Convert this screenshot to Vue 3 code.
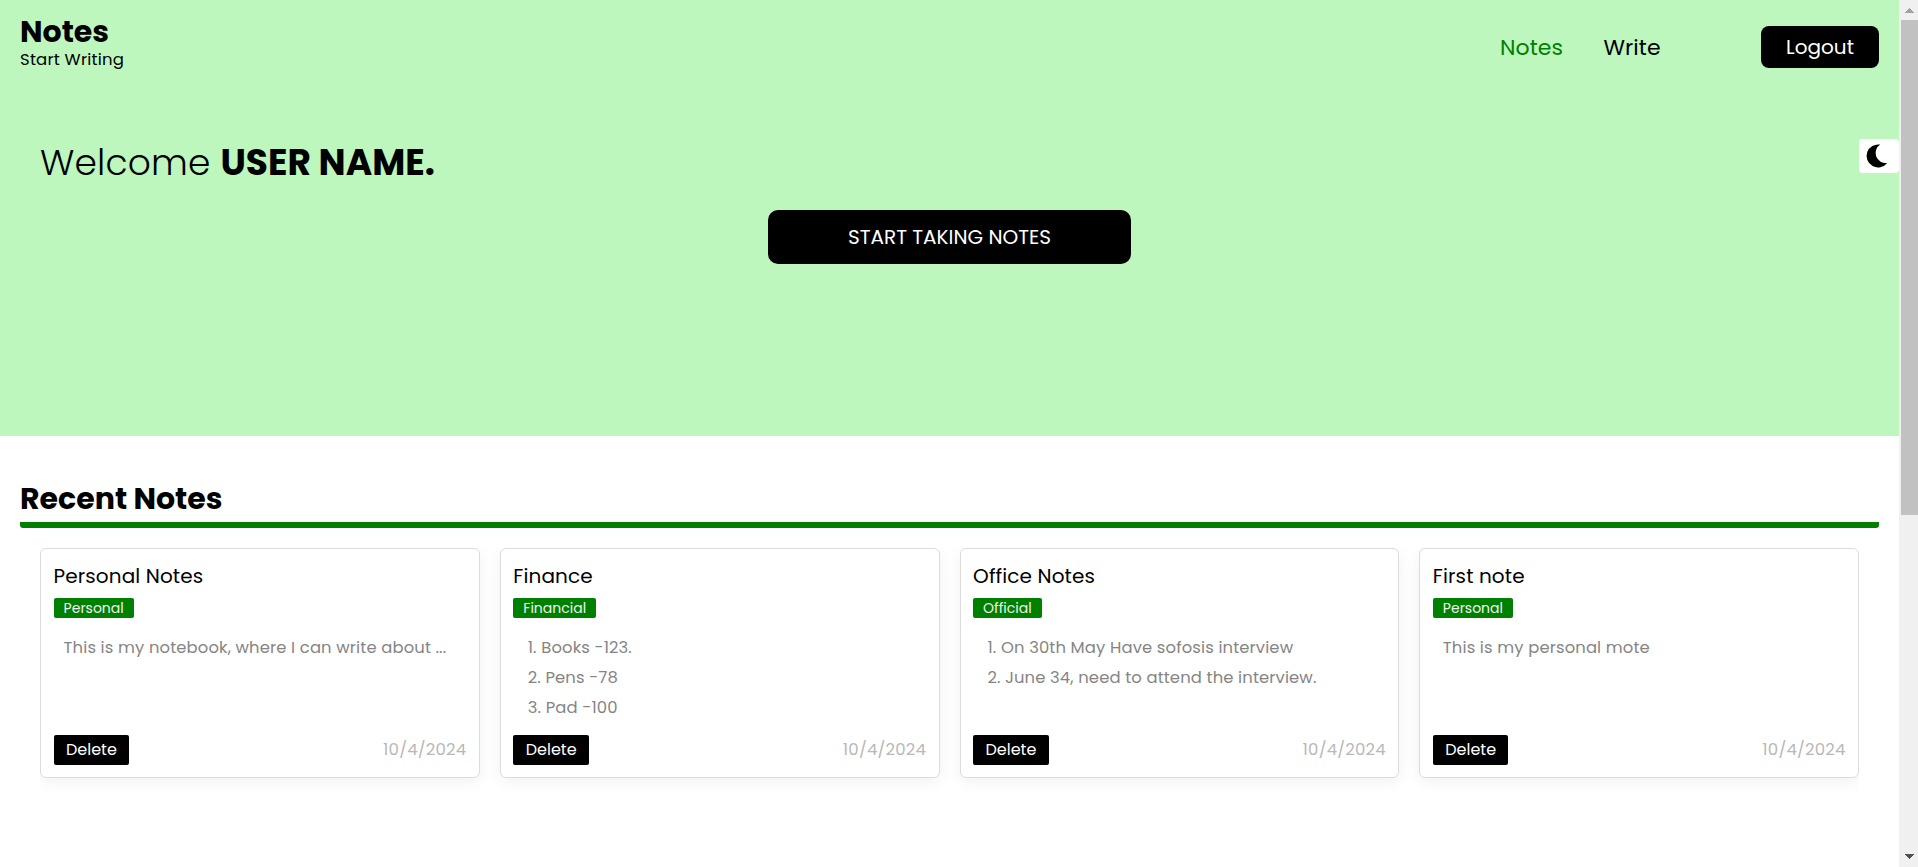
<script setup>
const notes = [
  { title: 'Personal Notes', tag: 'Personal', list: false, lines: ['This is my notebook, where I can write about ...'] },
  { title: 'Finance', tag: 'Financial', list: true, lines: ['1. Books -123.', '2. Pens -78', '3. Pad -100'] },
  {
    title: 'Office Notes', tag: 'Official', list: true,
    lines: ['1. On 30th May Have sofosis interview', '2. June 34, need to attend the interview.']
  },
  { title: 'First note', tag: 'Personal', list: false, lines: ['This is my personal mote'] }
]
</script>

<template>
  <div class="window">
    <main class="page">
      <section class="hero">
        <header class="header">
          <div class="brand">
            <h1 class="logo">Notes</h1>
            <p class="tagline">Start Writing</p>
          </div>
          <nav class="nav">
            <a class="link active">Notes</a>
            <a class="link write">Write</a>
            <button class="logout">Logout</button>
          </nav>
        </header>
        <p class="welcome">Welcome <b class="user">USER NAME.</b></p>
        <button class="start">START TAKING NOTES</button>
      </section>

      <button class="theme" aria-label="Dark mode">
        <svg width="20" height="24" viewBox="0 0 20 24">
          <path d="M13.2 .6A11.5 11.5 0 1 0 20.2 18.9A10 10 0 0 1 13.2 .6Z" />
        </svg>
      </button>

      <section class="recent">
        <h2 class="heading">Recent Notes</h2>
        <div class="rule"></div>
        <div class="grid">
          <article v-for="n in notes" :key="n.title" class="card">
            <h3 class="title">{{ n.title }}</h3>
            <span class="tag">{{ n.tag }}</span>
            <div class="body" :class="{ list: n.list }">
              <p v-for="l in n.lines" :key="l" class="line">{{ l }}</p>
            </div>
            <footer class="foot">
              <button class="delete">Delete</button>
              <time class="date">10/4/2024</time>
            </footer>
          </article>
        </div>
      </section>
    </main>

    <aside class="scrollbar">
      <svg class="arrow" width="9" height="5" viewBox="0 0 9 5" shape-rendering="crispEdges"><path fill="#a3a3a3" d="M4 0h1v1h1v1h1v1h1v1h1v1H0V4h1V3h1V2h1V1h1z" /></svg>
      <div class="thumb"></div>
      <svg class="arrow down" width="9" height="5" viewBox="0 0 9 5" shape-rendering="crispEdges"><path fill="#505050" d="M0 0h9v1H8v1H7v1H6v1H5v1H4V4H3V3H2V2H1V1H0z" /></svg>
    </aside>
  </div>
</template>

<style>
body { margin: 0; overflow: hidden; background: #fff; }
</style>

<style scoped>
.window {
  display: flex;
  height: 867px;
  font-family: Poppins, Inter, "Liberation Sans", sans-serif;
  color: #000;
}
.window * { box-sizing: border-box; }
h1, h2, h3, p { margin: 0; }
button { border: 0; padding: 0; font-family: inherit; font-weight: 400; color: #fff; background: #000; white-space: nowrap; }

.page { position: relative; flex: 1; min-width: 0; overflow: hidden; }

.hero { height: 436px; background: #bdf7bd; display: flex; flex-direction: column; }
.header { height: 94px; padding: 0 20px; display: flex; justify-content: space-between; align-items: center; }
.brand { align-self: flex-start; padding-top: 17px; }
.logo { font-size: 30px; line-height: 30px; font-weight: 700; }
.tagline { margin-top: 1px; font-size: 16.5px; line-height: 24px; letter-spacing: 0.2px; }
.nav { display: flex; align-items: center; }
.link { width: 103.5px; padding-top: 1px; font-size: 22px; line-height: 42px; letter-spacing: 0.08px; }
.link.active { color: #008000; }
.link.write { width: 157.5px; }
.logout { width: 118px; height: 42px; border-radius: 8px; font-size: 20px; }

.welcome { margin: 42px 0 0 40px; font-size: 36px; line-height: 54px; font-weight: 300; letter-spacing: 0.15px; }
.user { font-weight: 700; letter-spacing: 0; }
.start { width: 363px; height: 54px; margin-top: 20px; align-self: center; border-radius: 10px; font-size: 20px; }

.theme {
  position: absolute;
  top: 139px;
  right: 0;
  width: 40px;
  height: 34px;
  padding-left: 8px;
  border-radius: 4px;
  background: #fff;
  display: flex;
  align-items: center;
}
.theme svg { overflow: visible; }

.recent { padding: 48px 20px 0; }
.heading { font-size: 30px; line-height: 30px; font-weight: 700; }
.rule { height: 6px; margin-top: 8px; background: #008000; border-radius: 0 0 3px 3px; }
.grid {
  display: grid;
  grid-template-columns: repeat(4, 1fr);
  gap: 20px;
  margin: 20px 20px 0;
  padding-bottom: 40px;
  overflow: hidden;
}
.card {
  height: 230px;
  padding: 12px 12.6px;
  border: 1px solid #dcdcdc;
  border-radius: 6px;
  background: #fff;
  box-shadow: 0 4px 16px rgba(0, 0, 0, 0.06);
}
.title { font-size: 20px; line-height: 30px; font-weight: 400; letter-spacing: 0.1px; }
.tag {
  display: block;
  width: fit-content;
  height: 20px;
  margin-top: 7px;
  padding: 0 10px;
  border-radius: 2px;
  background: #008000;
  color: #f2f2f2;
  font-size: 14px;
  line-height: 20px;
}
.body { height: 90px; margin-top: 15px; padding-left: 10px; color: #858585; }
.body.list { padding-left: 14.4px; }
.line { font-size: 16.4px; line-height: 30px; letter-spacing: 0.14px; white-space: nowrap; }
.foot { display: flex; justify-content: space-between; align-items: center; margin-top: 12px; }
.delete { height: 30px; padding: 0 12.4px 2px; border-radius: 2px; font-size: 16px; }
.date { margin-right: -0.2px; color: #b8b8b8; font-size: 16.5px; line-height: 30px; letter-spacing: 0.2px; }

.scrollbar {
  flex: none;
  width: 19px;
  padding: 8px 0 8px 2px;
  background: #f0f0f0;
  display: flex;
  flex-direction: column;
}
.arrow { margin-left: 4px; }
.thumb { height: 495px; margin-top: 7px; background: #c1c1c1; }
.arrow.down { margin-top: auto; }
</style>
